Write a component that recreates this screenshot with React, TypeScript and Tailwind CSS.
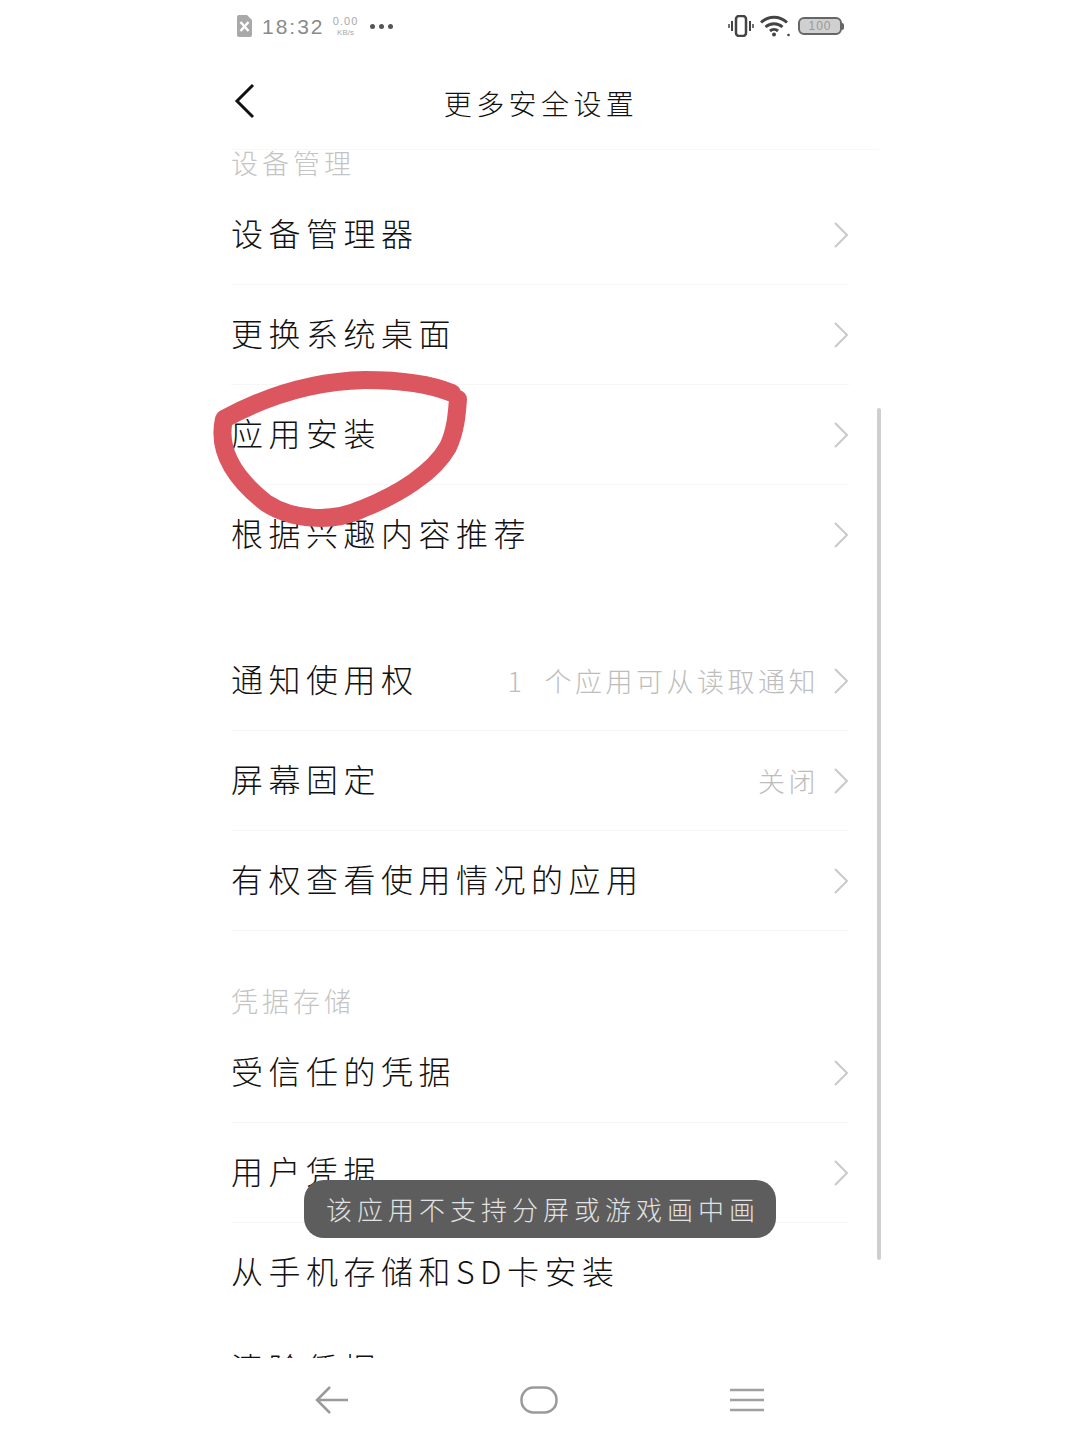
const CJK = "font-['Noto_Sans_CJK_SC','Noto_Sans',sans-serif]";

function Chevron() {
  return (
    <svg viewBox="0 0 16 28" className="h-[28px] w-[16px] shrink-0" fill="none" stroke="#c9c9c9" strokeWidth="2">
      <path d="M2 2l12 12L2 26" />
    </svg>
  );
}

function Row({ title, value, last, noArrow }: { title: string; value?: React.ReactNode; last?: boolean; noArrow?: boolean }) {
  return (
    <div className={`flex h-[100px] items-center justify-between ${last ? "" : "border-b border-[#f6f6f6]"}`}>
      <span className="pb-[6px] text-[32px] leading-none font-light tracking-[5.500px] whitespace-nowrap text-[#111]">{title}</span>
      <div className="flex items-center gap-[14px]">
        {value}
        {!noArrow && <Chevron />}
      </div>
    </div>
  );
}

function Value({ children }: { children: React.ReactNode }) {
  return <span className="text-[27px] leading-none font-light tracking-[3.500px] whitespace-pre text-[#bdbdbd]">{children}</span>;
}

function SectionLabel({ children }: { children: string }) {
  return <div className="h-[35px] text-[27px] leading-[26px] font-light tracking-[4px] text-[#c4c4c4]">{children}</div>;
}

function StatusBar() {
  return (
    <div className="flex h-[52px] items-center justify-between pr-[5px] pl-[6px]">
      <div className="flex items-center">
        <svg viewBox="0 0 15 22" className="h-[22px] w-[15px]">
          <path d="M2 0h8l5 5v15a2 2 0 0 1-2 2H2a2 2 0 0 1-2-2V2a2 2 0 0 1 2-2z" fill="#a9a9a9" />
          <path d="M3.500 7l8 9M11.500 7l-8 9" stroke="#fff" strokeWidth="2.500" />
        </svg>
        <span className="ml-[10px] font-['Liberation_Sans',sans-serif] text-[21px] leading-none tracking-[2px] text-[#8a8a8a]">18:32</span>
        <div className="ml-[8px] flex w-[26px] flex-col items-center font-['Liberation_Sans',sans-serif] leading-none text-[#aaa]">
          <span className="text-[11px] tracking-[1px]">0.00</span>
          <span className="mt-[2px] text-[8px]">KB/s</span>
        </div>
        <div className="ml-[11px] flex gap-[4px]">
          <span className="size-[5px] rounded-full bg-[#555]" />
          <span className="size-[5px] rounded-full bg-[#555]" />
          <span className="size-[5px] rounded-full bg-[#555]" />
        </div>
      </div>
      <div className="flex items-center">
        <svg viewBox="0 0 26 22" className="h-[22px] w-[26px]" fill="none" stroke="#444">
          <rect x="8" y="1" width="10" height="20" rx="3" strokeWidth="2.500" />
          <path d="M4 6v10M22 6v10" strokeWidth="2" />
          <path d="M1 9v4M25 9v4" strokeWidth="1.500" />
        </svg>
        <svg viewBox="0 0 30 22" className="ml-[6px] h-[22px] w-[30px]" fill="none" stroke="#444" strokeWidth="3">
          <path d="M1 7.500c7.500-7 18.500-7 26 0" />
          <path d="M5.500 12c5-4.500 12-4.500 17 0" />
          <path d="M10 16c2.300-2 5.700-2 8 0" />
          <circle cx="14" cy="19.500" r="2" fill="#444" stroke="none" />
          <circle cx="28.500" cy="20" r="1.300" fill="#444" stroke="none" />
        </svg>
        <div className="ml-[8px] flex items-center">
          <div className="flex h-[18px] w-[44px] items-center justify-center rounded-[6px] border-2 border-[#666] bg-[#d0d0d0] font-['Liberation_Sans',sans-serif] text-[12px] leading-none tracking-[1px] text-[#999]">
            100
          </div>
          <span className="h-[7px] w-[2px] rounded-r-sm bg-[#666]" />
        </div>
      </div>
    </div>
  );
}

function BottomNav() {
  return (
    <div className="mx-auto flex h-[81px] w-[450px] items-center justify-between pt-[2px]">
      <svg viewBox="0 0 34 30" className="h-[30px] w-[34px]" fill="none" stroke="#9a9a9a" strokeWidth="2.500">
        <path d="M15 2L2 15l13 13M2 15h31" />
      </svg>
      <svg viewBox="0 0 38 28" className="h-[28px] w-[38px]" fill="none" stroke="#9a9a9a" strokeWidth="2.500">
        <rect x="1.500" y="1.500" width="35" height="25" rx="12" />
      </svg>
      <svg viewBox="0 0 36 24" className="h-[24px] w-[36px]" fill="none" stroke="#a0a0a0" strokeWidth="2.500">
        <path d="M1 2h34M1 12h34M1 22h34" />
      </svg>
    </div>
  );
}

export default function App() {
  return (
    <div className={`relative h-[1439px] w-[1080px] overflow-hidden bg-white ${CJK}`}>
      <div className="mx-auto w-[618px]">
        <StatusBar />

        <div className="-mr-[30px] flex h-[98px] items-center border-b border-[#f8f8f8] pr-[30px]">
          <div className="grid w-full grid-cols-[1fr_auto_1fr] items-center">
            <svg viewBox="0 0 22 36" className="ml-[3px] h-[36px] w-[22px]" fill="none" stroke="#111" strokeWidth="3">
              <path d="M19 2L3 18l16 16" />
            </svg>
            <span className="pt-[4px] pl-[2px] text-[28px] leading-none font-light tracking-[4.400px] text-[#111]">更多安全设置</span>
            <span />
          </div>
        </div>

        <div className="h-[1208px] overflow-hidden">
          <SectionLabel>设备管理</SectionLabel>
          <Row title="设备管理器" />
          <Row title="更换系统桌面" />
          <Row title="应用安装" />
          <Row title="根据兴趣内容推荐" last />

          <div className="mt-[46px]">
            <Row title="通知使用权" value={<Value>{"1  个应用可从读取通知"}</Value>} />
            <Row title="屏幕固定" value={<Value>关闭</Value>} />
            <Row title="有权查看使用情况的应用" />
          </div>

          <div className="mt-[57px]">
            <SectionLabel>凭据存储</SectionLabel>
            <Row title="受信任的凭据" />
            <Row title="用户凭据" />
            <Row title="从手机存储和SD卡安装" last noArrow />
            <div className="-mt-[3px]">
              <Row title="清除凭据" last noArrow />
            </div>
          </div>
        </div>

        <BottomNav />
      </div>

      {/* scrollbar */}
      <div className="absolute top-[408px] left-[877px] h-[852px] w-[4px] rounded-full bg-[#cfcfcf]" />

      {/* red marker circled by hand over the screenshot */}
      <svg viewBox="0 0 1080 1439" className="pointer-events-none absolute inset-0 h-[1439px] w-[1080px]" fill="none">
        <path
          d="M452 393C430 384 400 380 365 380C315 381 270 394 224 419C217 450 234 478 266 503C292 520 332 523 362 509C400 494 434 472 448 447C456 430 457 412 458 399"
          stroke="#dc5660"
          strokeWidth="18"
          strokeLinecap="round"
          strokeLinejoin="round"
        />
      </svg>

      {/* toast */}
      <div className="absolute top-[1180px] left-[304px] flex h-[58px] w-[472px] items-center justify-center rounded-[20px] bg-[#5d5d5d] pl-[6px] text-[26px] leading-none font-light tracking-[5px] whitespace-nowrap text-[#e2e2e2]">
        该应用不支持分屏或游戏画中画
      </div>
    </div>
  );
}
